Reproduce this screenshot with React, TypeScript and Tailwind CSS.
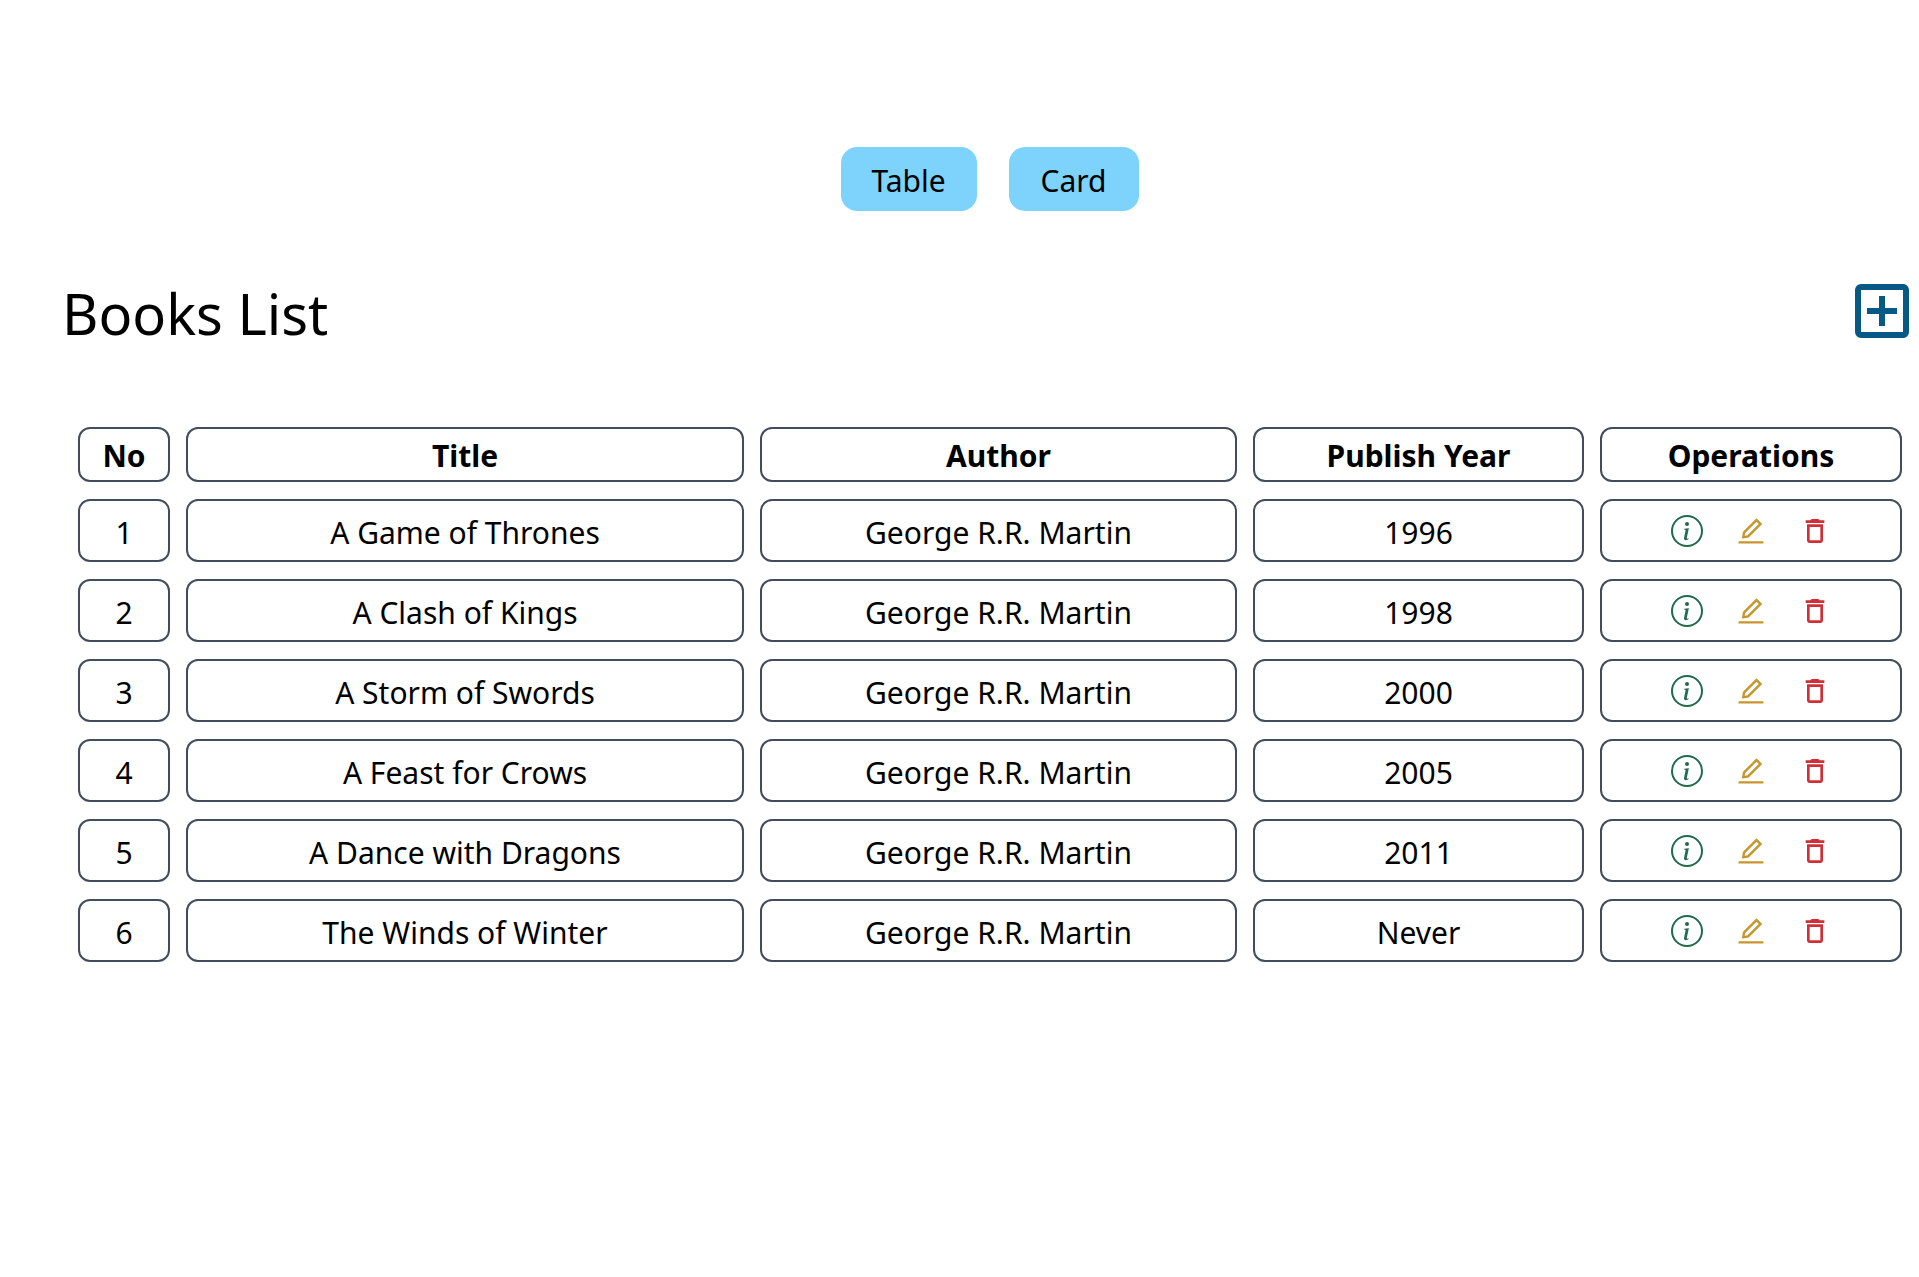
import { BsInfoCircle } from "react-icons/bs";
import { AiOutlineEdit } from "react-icons/ai";
import { MdOutlineAddBox, MdOutlineDelete } from "react-icons/md";

const books = [
  { title: "A Game of Thrones", author: "George R.R. Martin", year: "1996" },
  { title: "A Clash of Kings", author: "George R.R. Martin", year: "1998" },
  { title: "A Storm of Swords", author: "George R.R. Martin", year: "2000" },
  { title: "A Feast for Crows", author: "George R.R. Martin", year: "2005" },
  { title: "A Dance with Dragons", author: "George R.R. Martin", year: "2011" },
  { title: "The Winds of Winter", author: "George R.R. Martin", year: "Never" },
];

const headCell = "h-[55px] border-2 border-[#414d5e] rounded-xl p-0 pt-[3px] font-bold text-center";
const bodyCell = "h-[63px] border-2 border-[#414d5e] rounded-xl p-0 pt-1 text-center";

function App() {
  return (
    <div className="min-h-[1277px] bg-white pl-[62px] text-black text-[30px] leading-10 font-['Noto_Sans',sans-serif]">
      <div className="flex justify-center gap-8 pt-[147px] pr-0.5">
        <button className="h-16 w-[136px] rounded-2xl bg-[#7dd3fc] pt-1">Table</button>
        <button className="h-16 w-[130px] rounded-2xl bg-[#7dd3fc] pt-1">Card</button>
      </div>
      <div className="flex items-start justify-between pr-px mt-16">
        <h1 className="text-[56px] leading-[72px] pt-0.5">Books List</h1>
        <MdOutlineAddBox className="text-[#075985]" size={72} />
      </div>
      <table className="mt-[61px] w-[1856px] table-fixed border-separate border-spacing-x-4 border-spacing-y-[17px]">
        <colgroup>
          <col className="w-[92px]" />
          <col className="w-[558px]" />
          <col className="w-[477px]" />
          <col className="w-[331px]" />
          <col className="w-[302px]" />
        </colgroup>
        <thead>
          <tr>
            <th className={headCell}>No</th>
            <th className={headCell}>Title</th>
            <th className={headCell}>Author</th>
            <th className={headCell}>Publish Year</th>
            <th className={headCell}>Operations</th>
          </tr>
        </thead>
        <tbody>
          {books.map((book, i) => (
            <tr key={book.title}>
              <td className={bodyCell}>{i + 1}</td>
              <td className={bodyCell}>{book.title}</td>
              <td className={bodyCell}>{book.author}</td>
              <td className={bodyCell}>{book.year}</td>
              <td className="h-[63px] border-2 border-[#414d5e] rounded-xl p-0 text-center">
                <div className="flex justify-center gap-8">
                  <BsInfoCircle className="text-[#1f6b4a]" size={32} />
                  <AiOutlineEdit className="text-[#c9952b]" size={32} />
                  <MdOutlineDelete className="text-[#cf2f35]" size={32} />
                </div>
              </td>
            </tr>
          ))}
        </tbody>
      </table>
    </div>
  );
}

export default App;
